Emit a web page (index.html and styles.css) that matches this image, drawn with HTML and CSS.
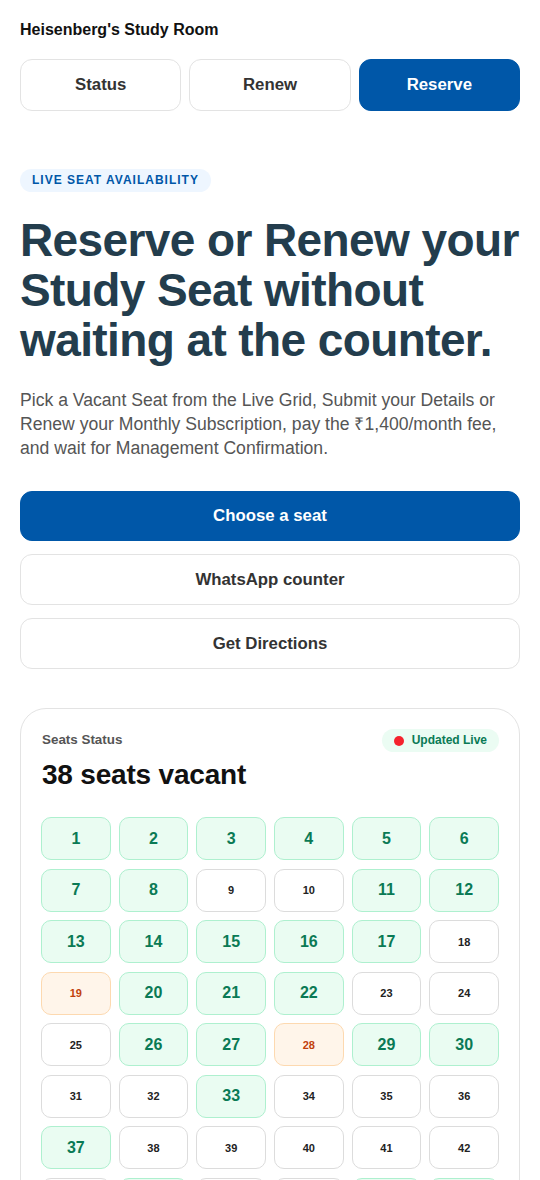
FILE: index.html
```html
<!DOCTYPE html>
<html lang="en">
<head>
  <meta charset="UTF-8" />
  <meta name="viewport" content="width=device-width, initial-scale=1.0"/>
  <title>Heisenberg's Study Room</title>
  <link rel="stylesheet" href="styles.css">
</head>
<body>
  <div class="page">
    <header class="top">
      <div class="brand">Heisenberg's Study Room</div>
      <nav class="tabs">
        <button class="tab">Status</button>
        <button class="tab">Renew</button>
        <button class="tab active">Reserve</button>
      </nav>
    </header>

    <section class="hero">
      <span class="eyebrow">LIVE SEAT AVAILABILITY</span>
      <h1>Reserve or Renew your Study Seat without waiting at the counter.</h1>
      <p class="lead">Pick a Vacant Seat from the Live Grid, Submit your Details or Renew your Monthly Subscription, pay the ₹1,400/month fee, and wait for Management Confirmation.</p>
      <div class="actions">
        <button class="btn primary">Choose a seat</button>
        <button class="btn">WhatsApp counter</button>
        <button class="btn">Get Directions</button>
      </div>
    </section>

    <section class="card">
      <div class="card-head">
        <div>
          <div class="card-label">Seats Status</div>
          <div class="card-count" id="vacantCount">38 seats vacant</div>
        </div>
        <span class="live"><span class="dot"></span>Updated Live</span>
      </div>
      <div class="seats" id="seatGrid"></div>
    </section>
  </div>

  <script>
    // Seat states: v = vacant, o = occupied, p = pending confirmation
    var seats = [
      'v','v','v','v','v','v',
      'v','v','o','o','v','v',
      'v','v','v','v','v','o',
      'p','v','v','v','o','o',
      'o','v','v','p','v','v',
      'o','o','v','o','o','o',
      'v','o','o','o','o','o',
      'o','v','o','o','v','v',
      'v','v','o','v','o','v',
      'v','o','v','v','o','v',
      'v','o','o','v','v','o'
    ];

    var grid = document.getElementById('seatGrid');
    var vacant = 0;
    seats.forEach(function (state, i) {
      var cell = document.createElement('button');
      cell.className = 'seat ' + state;
      cell.textContent = i + 1;
      if (state === 'v') vacant++;
      grid.appendChild(cell);
    });
    document.getElementById('vacantCount').textContent = vacant + ' seats vacant';
  </script>
</body>
</html>
```

FILE: styles.css
```css
:root {
  --blue: #0057a8;
  --ink: #111;
  --heading: #233d4d;
  --muted: #555;
  --border: #e3e3e3;
  --mint-bg: #eafcf2;
  --mint-border: #aef0cf;
  --mint-text: #0a7a55;
  --amber-bg: #fff5ea;
  --amber-border: #fdd9b0;
  --amber-text: #c2410c;
}

* {
  box-sizing: border-box;
}

body {
  margin: 0;
  background: #fff;
  color: var(--ink);
  font-family: "Liberation Sans", Arial, sans-serif;
}

.page {
  padding: 20px 20px 40px;
}

.brand {
  font-size: 16px;
  font-weight: 700;
  line-height: 19px;
  color: #111;
}

.tabs {
  display: grid;
  grid-template-columns: repeat(3, 1fr);
  gap: 8px;
  margin-top: 20px;
}

button {
  font-family: inherit;
  cursor: pointer;
}

.tab {
  height: 52px;
  border: 1px solid var(--border);
  border-radius: 12px;
  background: #fff;
  color: #333;
  font-size: 16.8px;
  font-weight: 700;
}

.tab.active {
  background: var(--blue);
  border-color: var(--blue);
  color: #fff;
}

.hero {
  margin-top: 58px;
}

.eyebrow {
  display: inline-block;
  padding: 5px 12px;
  border-radius: 999px;
  background: #eef6ff;
  color: var(--blue);
  font-size: 12px;
  font-weight: 700;
  line-height: 13px;
  letter-spacing: 1px;
}

h1 {
  margin: 23px 0 0;
  font-size: 46px;
  line-height: 50px;
  font-weight: 700;
  letter-spacing: -0.6px;
  color: var(--heading);
}

.lead {
  margin: 23px 0 0;
  font-size: 17.6px;
  line-height: 24px;
  color: var(--muted);
}

.actions {
  display: flex;
  flex-direction: column;
  gap: 13px;
  margin-top: 31px;
}

.btn {
  height: 51px;
  border: 1px solid var(--border);
  border-radius: 12px;
  background: #fff;
  color: #333;
  font-size: 16.8px;
  font-weight: 700;
}

.btn.primary {
  height: 50px;
  background: var(--blue);
  border-color: var(--blue);
  color: #fff;
}

.card {
  margin-top: 39px;
  border: 1px solid var(--border);
  border-radius: 26px;
  padding: 20px;
}

.card-head {
  display: flex;
  justify-content: space-between;
  align-items: flex-start;
}

.card-label {
  margin-top: 3px;
  padding-left: 1px;
  font-size: 13.4px;
  font-weight: 700;
  color: #555;
}

.card-count {
  margin-top: 12px;
  padding-left: 1px;
  font-size: 28px;
  font-weight: 700;
  letter-spacing: -0.2px;
  color: #111;
}

.live {
  display: inline-flex;
  align-items: center;
  gap: 8px;
  padding: 5px 12px;
  border-radius: 999px;
  background: #ebfcf3;
  color: var(--mint-text);
  font-size: 12px;
  font-weight: 700;
  line-height: 13px;
}

.dot {
  width: 10px;
  height: 10px;
  border-radius: 50%;
  background: #f5222d;
}

.seats {
  display: grid;
  grid-template-columns: repeat(6, 1fr);
  column-gap: 8px;
  row-gap: 8.5px;
  margin-top: 26px;
}

.seat {
  height: 43px;
  border: 1px solid #dcdcdc;
  border-radius: 10px;
  background: #fff;
  color: #222;
  font-size: 11px;
  font-weight: 700;
}

.seat.v {
  background: var(--mint-bg);
  border-color: var(--mint-border);
  color: var(--mint-text);
  font-size: 16px;
}

.seat.p {
  background: var(--amber-bg);
  border-color: var(--amber-border);
  color: var(--amber-text);
}
```
